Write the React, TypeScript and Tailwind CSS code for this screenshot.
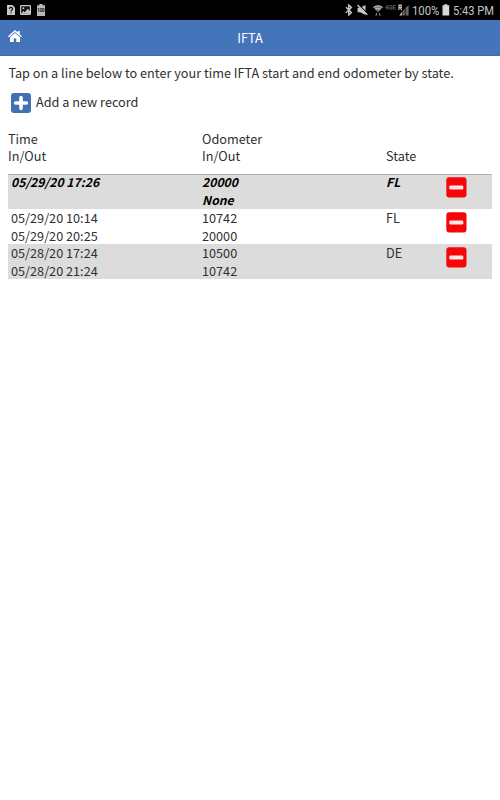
import React from 'react';

type Entry = { timeIn: string; timeOut: string; odoIn: string; odoOut: string; state: string; open?: boolean };

const entries: Entry[] = [
  { timeIn: '05/29/20 17:26', timeOut: '', odoIn: '20000', odoOut: 'None', state: 'FL', open: true },
  { timeIn: '05/29/20 10:14', timeOut: '05/29/20 20:25', odoIn: '10742', odoOut: '20000', state: 'FL' },
  { timeIn: '05/28/20 17:24', timeOut: '05/28/20 21:24', odoIn: '10500', odoOut: '10742', state: 'DE' },
];

function StatusBar() {
  return (
    <div className="flex h-5 items-center justify-between bg-black pl-[6px] pr-[7px] font-[Roboto,sans-serif] text-[#c4c4c4]">
      <div className="flex items-center gap-[5px]">
        <svg width="10" height="12" viewBox="0 0 10 12">
          <path d="M1 1h5.5L9 3.5V11H1z" fill="#c8c8c8" />
          <path d="M3.4 5Q3.4 3.3 5 3.3T6.6 4.8Q6.6 5.5 5.6 6.2Q5 6.6 5 7.5M5 8.4v1.2" stroke="#111" strokeWidth="1.2" fill="none" />
        </svg>
        <svg width="11" height="12" viewBox="0 0 11 12" className="-ml-px">
          <rect x=".6" y="1.6" width="9.8" height="8.8" rx=".6" fill="#111" stroke="#c8c8c8" strokeWidth="1.2" />
          <circle cx="3.4" cy="4.2" r="1" fill="#c8c8c8" />
          <path d="M1 9.8 3.3 7l1.5 1.2L7.8 4.8 10 7.3v2.5z" fill="#c8c8c8" />
        </svg>
        <svg width="10" height="12" viewBox="0 0 10 12">
          <path d="M3.3 0h3.4v1.3H9V12H1V1.3h2.3z" fill="#b8b8b8" />
          <text x="5" y="8.3" fontSize="4.6" fontWeight="700" textAnchor="middle" fill="#111" textLength="7.4">100</text>
        </svg>
      </div>
      <div className="flex items-center">
        <svg width="8" height="12" viewBox="0 0 8 12" className="mr-[4px]">
          <path d="M1 3.3 6.4 8.5 3.8 11V1l2.6 2.5L1 8.7" stroke="#c8c8c8" strokeWidth="1.4" fill="none" />
        </svg>
        <svg width="11" height="12" viewBox="0 0 11 12" className="mr-[5px]">
          <path d="M.6 3.8h2.6L8.5 1v10L3.2 8.2H.6z" fill="#c8c8c8" />
          <path d="M1.2 .2 11 10" stroke="#000" strokeWidth="1.2" />
          <path d="M.5 1 10.3 10.8" stroke="#c8c8c8" strokeWidth="1.4" />
        </svg>
        <svg width="10" height="12" viewBox="0 0 10 12" className="mr-[2px]">
          <path d="M.3 3.3Q5-.6 9.7 3.3L5 8.3z" fill="#777" />
          <path d="M.6 3.5Q5 0 9.4 3.5M2.3 5.4Q5 3.3 7.7 5.4" stroke="#b5b5b5" strokeWidth="1.2" fill="none" />
          <path d="M2.2 11.4 3.9 8v3.4zM7.8 11.4 6.1 8v3.4z" fill="#999" />
        </svg>
        <svg width="11" height="12" viewBox="0 0 11 12" className="mr-[2px]">
          <path d="M2.5 1 .5 4h3M2.8 1v4.5M7 1.6H4.8v3.5H7V3.4H6M10.8 1.5H8v3.6h2.8M8 3.3h2.4" stroke="#606060" strokeWidth=".9" fill="none" />
        </svg>
        <svg width="11" height="12" viewBox="0 0 11 12" className="mr-[3px]">
          <path d="M10.6 1v10.4H7.6V4zM6.8 5v6.4H5V6.8z" fill="#686868" />
          <path d="M4.3 7.3v4.1H1.4z" fill="#bbb" />
          <path d="M1 6V1.2h2.2v2.3H1M2.2 3.5 3.8 6" stroke="#ccc" strokeWidth="1.2" fill="none" />
        </svg>
        <span className="w-[27px] text-[12.2px] leading-5"><span className="inline-block origin-left scale-x-[.93] translate-y-px">100%</span></span>
        <svg width="8" height="12" viewBox="0 0 8 12" className="ml-[3px] mr-[3px]">
          <path d="M2.3.3h3v1h1.9v10.2H.5V1.3h1.8z" fill="#d8d8d8" />
        </svg>
        <span className="w-[40px] whitespace-nowrap text-[12.2px] leading-5"><span className="inline-block origin-left scale-x-[.91] translate-y-px">5:43 PM</span></span>
      </div>
    </div>
  );
}

function DeleteIcon() {
  return (
    <svg width="21" height="21" viewBox="0 0 21 21" aria-label="Delete">
      <rect x=".3" y=".3" width="20.2" height="20.2" rx="3" fill="#f60509" />
      <rect x="3.3" y="8.5" width="14" height="4" rx="1.2" fill="#ffe5e5" />
    </svg>
  );
}

export default function App() {
  return (
    <div className="h-[800px] w-[500px] overflow-hidden bg-white font-['Noto_Sans_CJK_SC',sans-serif] text-[12.7px] leading-[17.5px] text-[#303030]">
      <StatusBar />
      <header className="grid h-[36px] grid-cols-3 border-b border-[#3c6caf] bg-[#4474ba] text-white">
        <svg width="14" height="12" viewBox="0 0 14 12" className="ml-[8px] mt-[10px]">
          <path d="M7 0 0 6.2l.9 1L7 2l6.1 5.2.9-1-2.3-2V1H9.8v1.5z" fill="white" />
          <path d="M7 3 2 7.2V12h3.7V8.5h2.6V12H12V7.2z" fill="white" />
        </svg>
        <h1 className="pt-[9px] text-center">IFTA</h1>
      </header>
      <main className="px-2">
        <p className="whitespace-nowrap pl-[.4px] pt-[8px]">Tap on a line below to enter your time IFTA start and end odometer by state.</p>
        <button className="mt-[11px] flex h-5 items-start pl-[3px]">
          <svg width="20" height="20" viewBox="0 0 20 20">
            <rect width="20" height="20" rx="3" fill="#4270b5" />
            <path d="M10 4.6v10.8M4.6 10h10.8" stroke="white" strokeWidth="3.6" strokeLinecap="round" />
          </svg>
          <span className="ml-[5px]">Add a new record</span>
        </button>
        <div className="mt-[17px] grid h-[44.5px] grid-cols-[194px_184px_60px_46px]">
          <div>Time<br />In/Out</div>
          <div>Odometer<br />In/Out</div>
          <div className="pt-[17.5px]">State</div>
        </div>
        <div className="shadow-[inset_0_1px_0_#b0b0b0]">
          {entries.map((e) => (
            <div
              key={e.timeIn}
              className={`grid h-[35px] grid-cols-[194px_184px_60px_46px] even:bg-white odd:bg-[#dcdcdc] ${e.open ? 'font-bold italic text-[12.2px] text-black shadow-[inset_0_1px_0_#b0b0b0]' : ''}`}
            >
              <div className="pl-[3px]">{e.timeIn}<br />{e.timeOut}</div>
              <div>{e.odoIn}<br />{e.odoOut}</div>
              <div>{e.state}</div>
              <div className="pt-[3px]"><DeleteIcon /></div>
            </div>
          ))}
        </div>
      </main>
    </div>
  );
}
